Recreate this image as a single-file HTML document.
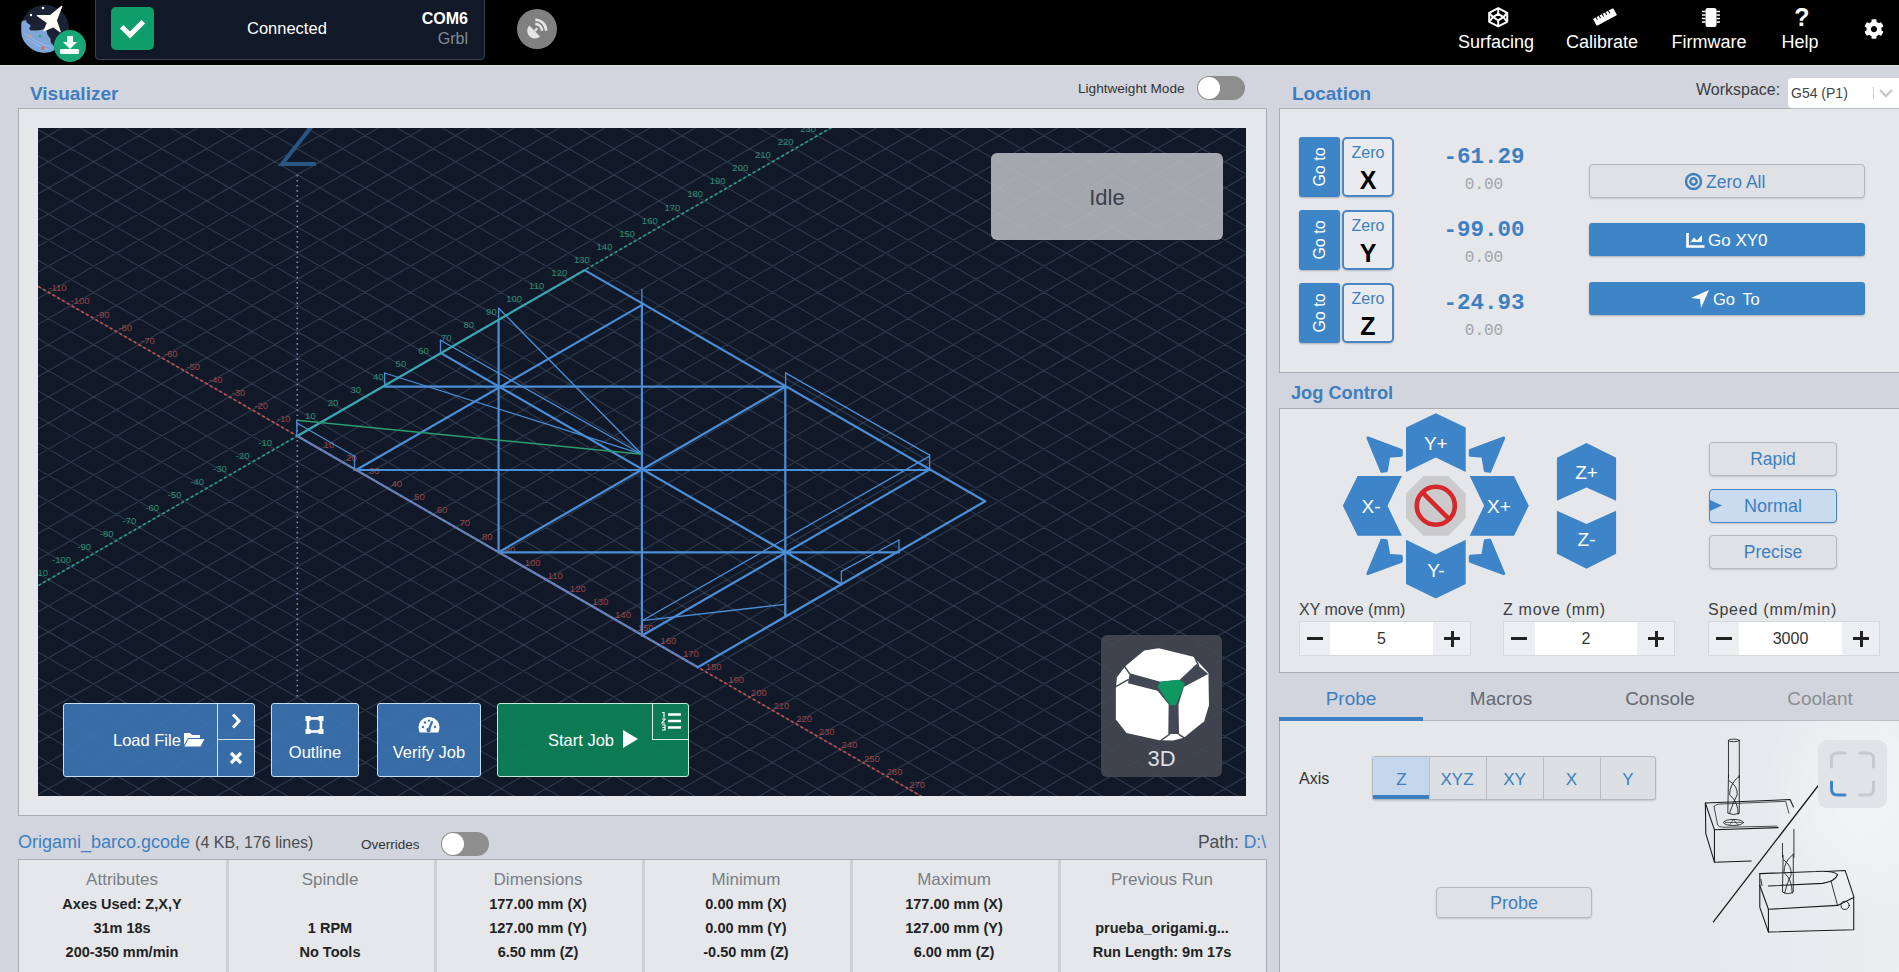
<!DOCTYPE html>
<html><head><meta charset="utf-8">
<style>
*{box-sizing:border-box;margin:0;padding:0}
html,body{width:1899px;height:972px;overflow:hidden}
body{background:#d2d5dd;font-family:"Liberation Sans",sans-serif;position:relative;color:#333}
.a{position:absolute}
.hdr{left:0;top:0;width:1899px;height:65px;background:#000;border-bottom:0}
.conn{left:95px;top:-2px;width:390px;height:62px;background:#111827;border:1px solid #3b4252;border-radius:0 0 4px 4px}
.title{font-weight:bold;color:#3d7ec0;font-size:19px}
.nav{color:#fff;font-size:18px;text-align:center}
.box{border:1px solid #a9adb5;background:#e5e7eb}
.btnb{background:#3e85c7;color:#fff;border-radius:3px}
.mono{font-family:"Liberation Mono",monospace}
</style></head><body>
<!-- HEADER -->
<div class="a hdr"></div>
<div class="a" style="left:0;top:65px;width:1899px;height:1px;background:#dfe2e7"></div>
<svg class="a" style="left:0;top:0" width="100" height="64" viewBox="0 0 100 64">
  <circle cx="45" cy="29" r="24" fill="#1a2234"/>
  <path d="M21.3 23.7 Q21.5 20.8 22.9 20.7 Q25.5 19.8 26.2 20.4 Q26.5 22.5 27.2 23 Q30.5 24.5 30.8 26 Q29 28 29.2 29 Q31 30.8 32.1 30.6 Q37 30.5 40.7 30 Q44 29 45.9 29 Q47 32 47.3 34.2 Q49 37 50.5 38.8 Q50.5 41 50.9 42.8 Q53 44.5 53.8 46.1 Q54.5 48 54.5 50 Q49 53.5 43.3 52.7 Q36 52 31.5 48.7 Q26 45 23.6 40.8 Q21 36 21.3 31.6 Z" fill="#7ea6d8"/>
  <path d="M24.5 33 Q36 43 51 47 M26 38 Q38 46 48 50" stroke="#a8c4e6" stroke-width="0.7" fill="none"/>
  <circle cx="30" cy="36" r="1.6" fill="#c9a07a"/>
  <circle cx="40" cy="36" r="1.6" fill="#3aa57a"/>
  <circle cx="43" cy="48" r="1.8" fill="#d86a6a"/>
  <path d="M61.8 6.3 L50.5 15.5 L37.2 15.6 L47.5 22.8 L44 30.8 L53.5 26.8 L60.2 31.8 L56.3 20.5 Z" fill="#fdfcf4" stroke="#fdfcf4" stroke-width="1.2" stroke-linejoin="round"/>
  <circle cx="43" cy="8" r="1.3" fill="#fff"/>
  <circle cx="31" cy="15" r="1.2" fill="#fff"/>
  <circle cx="70" cy="46" r="16" fill="#18a878"/>
  <path d="M67 36 h6 v6 h4 l-7 7 l-7 -7 h4 z" fill="#f2fff8"/>
  <rect x="60" y="49" width="19" height="5" rx="1" fill="#f2fff8"/>
</svg>
<div class="a conn"></div>
<div class="a" style="left:111px;top:7px;width:43px;height:43px;background:#0f9d69;border-radius:5px"></div>
<svg class="a" style="left:111px;top:7px" width="43" height="43" viewBox="0 0 43 43"><path d="M12.5 21.5 L19 28 L30.5 16.5" stroke="#fff" stroke-width="5" fill="none" stroke-linecap="square"/></svg>
<div class="a" style="left:247px;top:19px;color:#fff;font-size:16.5px">Connected</div>
<div class="a" style="left:400px;top:10px;width:68px;text-align:right;color:#fff;font-size:16px;font-weight:bold">COM6</div>
<div class="a" style="left:400px;top:30px;width:68px;text-align:right;color:#858b95;font-size:16px">Grbl</div>
<div class="a" style="left:517px;top:9px;width:40px;height:40px;border-radius:50%;background:#808080"></div>
<svg class="a" style="left:517px;top:9px" width="40" height="40" viewBox="0 0 40 40">
  <path d="M12.3 16.4 A7.75 7.75 0 0 0 23.1 27.5 Z" fill="#e4e4e4"/>
  <path d="M17.7 21.9 L20.3 19.3" stroke="#e4e4e4" stroke-width="2.2"/>
  <path d="M18.3 14.9 A6.8 6.8 0 0 1 25 21.7" stroke="#e4e4e4" stroke-width="2.6" fill="none"/>
  <path d="M18.3 10.8 A10.9 10.9 0 0 1 29.1 21.7" stroke="#e4e4e4" stroke-width="2.6" fill="none"/>
</svg>

<svg class="a" style="left:1486px;top:7px" width="24" height="21" viewBox="0 0 24 21">
  <g fill="none" stroke="#fff" stroke-width="2" stroke-linejoin="round">
    <path d="M12.2 1.2 L21.2 5.8 V14.8 L12.2 19.4 L3.2 14.8 V5.8 Z"/>
    <path d="M12.2 6.9 L17.4 10.2 L12.2 13.3 L7 10.2 Z"/>
    <path d="M12.2 1.2 V6.9 M12.2 13.3 V19.4 M3.2 5.8 L7 10.2 L3.2 14.8 M21.2 5.8 L17.4 10.2 L21.2 14.8"/>
  </g>
</svg>
<svg class="a" style="left:1592px;top:7px" width="26" height="20" viewBox="0 0 26 20">
  <g transform="rotate(-28 13 10)"><rect x="1.5" y="6" width="23" height="8" rx="1" fill="#fff"/>
  <path d="M5 6 v3 M8.5 6 v3 M12 6 v3 M15.5 6 v3 M19 6 v3" stroke="#000" stroke-width="1"/></g>
</svg>
<svg class="a" style="left:1700px;top:7px" width="22" height="21" viewBox="0 0 22 21">
  <rect x="5.5" y="1" width="11" height="19" rx="2" fill="#fff"/>
  <path d="M2 4.5h3.5 M2 8h3.5 M2 11.5h3.5 M2 15h3.5 M16.5 4.5H20 M16.5 8H20 M16.5 11.5H20 M16.5 15H20" stroke="#fff" stroke-width="1.4"/>
</svg>
<div class="a" style="left:1791px;top:3px;width:22px;text-align:center;color:#fff;font-size:25px;font-weight:bold">?</div>
<svg class="a" style="left:1864px;top:19px" width="20" height="20" viewBox="0 0 512 512"><path fill="#fff" d="M487.4 315.7l-42.6-24.6c4.3-23.2 4.3-47 0-70.2l42.6-24.6c4.9-2.8 7.1-8.6 5.5-14-11.1-35.6-30-67.8-54.7-94.6-3.8-4.1-10-5.1-14.8-2.3L380.8 110c-17.9-15.4-38.5-27.3-60.8-35.1V25.8c0-5.6-3.9-10.5-9.4-11.7-36.7-8.2-74.3-7.8-109.2 0-5.5 1.2-9.4 6.1-9.4 11.7V75c-22.2 7.9-42.8 19.8-60.8 35.1L88.7 85.5c-4.9-2.8-11-1.9-14.8 2.3-24.7 26.700-43.600 58.900-54.700 94.600-1.700 5.400.600 11.200 5.500 14L67.300 221c-4.300 23.200-4.300 47 0 70.200l-42.600 24.600c-4.900 2.800-7.100 8.600-5.500 14 11.100 35.600 30 67.800 54.700 94.600 3.800 4.100 10 5.100 14.800 2.300l42.600-24.600c17.900 15.400 38.500 27.300 60.800 35.100v49.200c0 5.600 3.900 10.500 9.400 11.700 36.700 8.200 74.300 7.800 109.200 0 5.500-1.200 9.400-6.100 9.400-11.700v-49.200c22.200-7.900 42.800-19.800 60.800-35.100l42.600 24.600c4.900 2.800 11 1.900 14.800-2.300 24.700-26.700 43.600-58.900 54.700-94.600 1.500-5.500-.700-11.300-5.600-14.100zM256 336c-44.100 0-80-35.900-80-80s35.900-80 80-80 80 35.900 80 80-35.900 80-80 80z"/></svg>

<div class="a nav" style="left:1446px;top:32px;width:100px">Surfacing</div>
<div class="a nav" style="left:1552px;top:32px;width:100px">Calibrate</div>
<div class="a nav" style="left:1659px;top:32px;width:100px">Firmware</div>
<div class="a nav" style="left:1770px;top:32px;width:60px">Help</div>

<!-- VISUALIZER -->
<div class="a title" style="left:30px;top:83px">Visualizer</div>
<div class="a" style="left:1078px;top:81px;font-size:13.6px;color:#333">Lightweight Mode</div>
<div class="a" style="left:1197px;top:76px;width:48px;height:24px;border-radius:12px;background:#8e8e8e"></div>
<div class="a" style="left:1198px;top:77px;width:22px;height:22px;border-radius:50%;background:#fff"></div>
<div class="a box" style="left:18px;top:108px;width:1249px;height:708px"></div>
<svg class="a" style="left:38px;top:128px" width="1208" height="668" viewBox="38 128 1208 668">
<rect x="38" y="128" width="1208" height="668" fill="#111827"/>
<path d="M38 -549.52L1246 147.79M38 -523.40L1246 173.91M38 -497.28L1246 200.03M38 -471.16L1246 226.15M38 -445.04L1246 252.27M38 -418.92L1246 278.39M38 -392.80L1246 304.51M38 -366.68L1246 330.63M38 -340.56L1246 356.75M38 -314.44L1246 382.87M38 -288.32L1246 408.99M38 -262.20L1246 435.11M38 -236.08L1246 461.23M38 -209.96L1246 487.35M38 -183.84L1246 513.47M38 -157.72L1246 539.59M38 -131.60L1246 565.71M38 -105.48L1246 591.83M38 -79.36L1246 617.95M38 -53.24L1246 644.07M38 -27.12L1246 670.19M38 -1.00L1246 696.31M38 25.12L1246 722.43M38 51.24L1246 748.55M38 77.36L1246 774.67M38 103.48L1246 800.79M38 129.60L1246 826.91M38 155.72L1246 853.03M38 181.84L1246 879.15M38 207.96L1246 905.27M38 234.08L1246 931.39M38 260.20L1246 957.51M38 286.32L1246 983.63M38 312.44L1246 1009.75M38 338.56L1246 1035.87M38 364.68L1246 1061.99M38 390.80L1246 1088.11M38 416.92L1246 1114.23M38 443.04L1246 1140.35M38 469.16L1246 1166.47M38 495.28L1246 1192.59M38 521.40L1246 1218.71M38 547.52L1246 1244.83M38 573.64L1246 1270.95M38 599.76L1246 1297.07M38 625.88L1246 1323.19M38 652.00L1246 1349.31M38 678.12L1246 1375.43M38 704.24L1246 1401.55M38 730.36L1246 1427.67M38 756.48L1246 1453.79M38 782.60L1246 1479.91M38 141.64L1246 -555.67M38 167.76L1246 -529.55M38 193.88L1246 -503.43M38 220.00L1246 -477.31M38 246.12L1246 -451.19M38 272.24L1246 -425.07M38 298.36L1246 -398.95M38 324.48L1246 -372.83M38 350.60L1246 -346.71M38 376.72L1246 -320.59M38 402.84L1246 -294.47M38 428.96L1246 -268.35M38 455.08L1246 -242.23M38 481.20L1246 -216.11M38 507.32L1246 -189.99M38 533.44L1246 -163.87M38 559.56L1246 -137.75M38 585.68L1246 -111.63M38 611.80L1246 -85.51M38 637.92L1246 -59.39M38 664.04L1246 -33.27M38 690.16L1246 -7.15M38 716.28L1246 18.97M38 742.40L1246 45.09M38 768.52L1246 71.21M38 794.64L1246 97.33M38 820.76L1246 123.45M38 846.88L1246 149.57M38 873.00L1246 175.69M38 899.12L1246 201.81M38 925.24L1246 227.93M38 951.36L1246 254.05M38 977.48L1246 280.17M38 1003.60L1246 306.29M38 1029.72L1246 332.41M38 1055.84L1246 358.53M38 1081.96L1246 384.65M38 1108.08L1246 410.77M38 1134.20L1246 436.89M38 1160.32L1246 463.01M38 1186.44L1246 489.13M38 1212.56L1246 515.25M38 1238.68L1246 541.37M38 1264.80L1246 567.49M38 1290.92L1246 593.61M38 1317.04L1246 619.73M38 1343.16L1246 645.85M38 1369.28L1246 671.97M38 1395.40L1246 698.09M38 1421.52L1246 724.21M38 1447.64L1246 750.33M38 1473.76L1246 776.45" stroke="#2d394b" stroke-width="1.2" fill="none"/>
<line x1="14.5" y1="272.8" x2="942.1" y2="808.2" stroke="#c4514f" stroke-width="1.6" stroke-dasharray="3 2.5"/>
<line x1="14.5" y1="599.2" x2="851.6" y2="116.0" stroke="#2c9f86" stroke-width="1.6" stroke-dasharray="3 2.5"/>
<line x1="297.3" y1="174.8" x2="297.3" y2="697.2" stroke="#6a8ab8" stroke-width="1.7" stroke-dasharray="1.6 3.5"/>
<path d="M312 126 L282 164 L316 164" stroke="#2a5686" stroke-width="4" fill="none" stroke-linejoin="miter"/>
<g font-family="Liberation Sans" font-size="9.5" text-anchor="middle" opacity="0.8"><text x="57.4" y="291.3" fill="#b9504f">-110</text><text x="80.0" y="304.4" fill="#b9504f">-100</text><text x="102.7" y="317.5" fill="#b9504f">-90</text><text x="125.3" y="330.5" fill="#b9504f">-80</text><text x="147.9" y="343.6" fill="#b9504f">-70</text><text x="170.6" y="356.6" fill="#b9504f">-60</text><text x="193.2" y="369.7" fill="#b9504f">-50</text><text x="215.8" y="382.8" fill="#b9504f">-40</text><text x="238.4" y="395.8" fill="#b9504f">-30</text><text x="261.1" y="408.9" fill="#b9504f">-20</text><text x="283.7" y="421.9" fill="#b9504f">-10</text><text x="328.9" y="448.1" fill="#b9504f">10</text><text x="351.6" y="461.1" fill="#b9504f">20</text><text x="374.2" y="474.2" fill="#b9504f">30</text><text x="396.8" y="487.2" fill="#b9504f">40</text><text x="419.4" y="500.3" fill="#b9504f">50</text><text x="442.1" y="513.4" fill="#b9504f">60</text><text x="464.7" y="526.4" fill="#b9504f">70</text><text x="487.3" y="539.5" fill="#b9504f">80</text><text x="509.9" y="552.5" fill="#b9504f">90</text><text x="532.6" y="565.6" fill="#b9504f">100</text><text x="555.2" y="578.7" fill="#b9504f">110</text><text x="577.8" y="591.7" fill="#b9504f">120</text><text x="600.4" y="604.8" fill="#b9504f">130</text><text x="623.0" y="617.8" fill="#b9504f">140</text><text x="645.7" y="630.9" fill="#b9504f">150</text><text x="668.3" y="644.0" fill="#b9504f">160</text><text x="690.9" y="657.0" fill="#b9504f">170</text><text x="713.6" y="670.1" fill="#b9504f">180</text><text x="736.2" y="683.1" fill="#b9504f">190</text><text x="758.8" y="696.2" fill="#b9504f">200</text><text x="781.4" y="709.3" fill="#b9504f">210</text><text x="804.1" y="722.3" fill="#b9504f">220</text><text x="826.7" y="735.4" fill="#b9504f">230</text><text x="849.3" y="748.4" fill="#b9504f">240</text><text x="871.9" y="761.5" fill="#b9504f">250</text><text x="894.5" y="774.6" fill="#b9504f">260</text><text x="917.2" y="787.6" fill="#b9504f">270</text><text x="38.9" y="576.2" fill="#33a888">-110</text><text x="61.5" y="563.1" fill="#33a888">-100</text><text x="84.2" y="550.0" fill="#33a888">-90</text><text x="106.8" y="537.0" fill="#33a888">-80</text><text x="129.4" y="523.9" fill="#33a888">-70</text><text x="152.1" y="510.9" fill="#33a888">-60</text><text x="174.7" y="497.8" fill="#33a888">-50</text><text x="197.3" y="484.7" fill="#33a888">-40</text><text x="219.9" y="471.7" fill="#33a888">-30</text><text x="242.6" y="458.6" fill="#33a888">-20</text><text x="265.2" y="445.6" fill="#33a888">-10</text><text x="310.4" y="419.4" fill="#33a888">10</text><text x="333.1" y="406.4" fill="#33a888">20</text><text x="355.7" y="393.3" fill="#33a888">30</text><text x="378.3" y="380.3" fill="#33a888">40</text><text x="400.9" y="367.2" fill="#33a888">50</text><text x="423.6" y="354.1" fill="#33a888">60</text><text x="446.2" y="341.1" fill="#33a888">70</text><text x="468.8" y="328.0" fill="#33a888">80</text><text x="491.4" y="315.0" fill="#33a888">90</text><text x="514.1" y="301.9" fill="#33a888">100</text><text x="536.7" y="288.8" fill="#33a888">110</text><text x="559.3" y="275.8" fill="#33a888">120</text><text x="581.9" y="262.7" fill="#33a888">130</text><text x="604.5" y="249.7" fill="#33a888">140</text><text x="627.2" y="236.6" fill="#33a888">150</text><text x="649.8" y="223.5" fill="#33a888">160</text><text x="672.4" y="210.5" fill="#33a888">170</text><text x="695.1" y="197.4" fill="#33a888">180</text><text x="717.7" y="184.4" fill="#33a888">190</text><text x="740.3" y="171.3" fill="#33a888">200</text><text x="762.9" y="158.2" fill="#33a888">210</text><text x="785.6" y="145.2" fill="#33a888">220</text><text x="808.2" y="132.1" fill="#33a888">230</text></g>
<g stroke="#4b8fd8" fill="none" stroke-linecap="round">
<line x1="297.3" y1="436.0" x2="697.8" y2="667.2" stroke="#4b8fd8" stroke-width="2.2" />
<line x1="697.8" y1="667.2" x2="985.1" y2="501.3" stroke="#4b8fd8" stroke-width="2.2" />
<line x1="985.1" y1="501.3" x2="584.6" y2="270.1" stroke="#4b8fd8" stroke-width="2.2" />
<line x1="354.5" y1="470.0" x2="929.6" y2="470.0" stroke="#4b8fd8" stroke-width="2.2" />
<line x1="384.6" y1="386.7" x2="784.3" y2="386.7" stroke="#4b8fd8" stroke-width="2.2" />
<line x1="499.0" y1="552.3" x2="899.0" y2="552.3" stroke="#4b8fd8" stroke-width="2.2" />
<line x1="356.1" y1="470.0" x2="643.5" y2="304.1" stroke="#4b8fd8" stroke-width="2.2" />
<line x1="498.7" y1="552.2" x2="786.0" y2="386.4" stroke="#4b8fd8" stroke-width="2.2" />
<line x1="642.6" y1="635.3" x2="929.9" y2="469.4" stroke="#4b8fd8" stroke-width="2.2" />
<line x1="441.0" y1="353.1" x2="841.4" y2="584.2" stroke="#4b8fd8" stroke-width="2.2" />
<line x1="498.6" y1="319.8" x2="498.6" y2="552.3" stroke="#4b8fd8" stroke-width="2.2" />
<line x1="641.9" y1="302.8" x2="641.9" y2="635.8" stroke="#4b8fd8" stroke-width="2.2" />
<line x1="785.3" y1="386.7" x2="785.3" y2="615.2" stroke="#4b8fd8" stroke-width="2.2" />
<line x1="296.8" y1="436.3" x2="296.8" y2="420.2" stroke="#4b8fd8" stroke-width="1.3" />
<line x1="296.8" y1="423.0" x2="354.5" y2="456.3" stroke="#4b8fd8" stroke-width="1.3" />
<line x1="354.5" y1="456.3" x2="354.5" y2="470.0" stroke="#4b8fd8" stroke-width="1.3" />
<line x1="384.6" y1="373.0" x2="384.6" y2="386.7" stroke="#4b8fd8" stroke-width="1.3" />
<line x1="384.6" y1="373.0" x2="641.9" y2="454.2" stroke="#4b8fd8" stroke-width="1.3" />
<line x1="440.5" y1="340.3" x2="440.5" y2="354.0" stroke="#4b8fd8" stroke-width="1.3" />
<line x1="440.5" y1="340.3" x2="641.9" y2="454.2" stroke="#4b8fd8" stroke-width="1.3" />
<line x1="498.6" y1="308.2" x2="498.6" y2="320.0" stroke="#4b8fd8" stroke-width="1.3" />
<line x1="498.6" y1="308.2" x2="641.9" y2="454.2" stroke="#4b8fd8" stroke-width="1.3" />
<line x1="641.9" y1="289.3" x2="641.9" y2="303.0" stroke="#4b8fd8" stroke-width="1.3" />
<line x1="785.6" y1="372.9" x2="785.6" y2="387.0" stroke="#4b8fd8" stroke-width="1.3" />
<line x1="785.6" y1="372.9" x2="929.6" y2="455.1" stroke="#4b8fd8" stroke-width="1.3" />
<line x1="929.6" y1="455.1" x2="929.6" y2="470.0" stroke="#4b8fd8" stroke-width="1.3" />
<line x1="929.1" y1="456.4" x2="642.1" y2="620.7" stroke="#4b8fd8" stroke-width="1.3" />
<line x1="642.1" y1="620.7" x2="785.3" y2="604.3" stroke="#4b8fd8" stroke-width="1.3" />
<line x1="785.3" y1="604.3" x2="785.3" y2="616.0" stroke="#4b8fd8" stroke-width="1.3" />
<line x1="841.4" y1="571.4" x2="841.4" y2="585.1" stroke="#4b8fd8" stroke-width="1.3" />
<line x1="841.4" y1="571.4" x2="899.0" y2="540.0" stroke="#4b8fd8" stroke-width="1.3" />
<line x1="899.0" y1="540.0" x2="899.0" y2="552.3" stroke="#4b8fd8" stroke-width="1.3" />
</g>
<line x1="297.3" y1="436.0" x2="584.6" y2="270.1" stroke="#3aa6b4" stroke-width="2.2" />
<line x1="296.8" y1="420.2" x2="641.9" y2="454.2" stroke="#2c9e6e" stroke-width="1.6" />
<line x1="297.3" y1="436.0" x2="697.8" y2="667.2" stroke="#c4514f" stroke-width="1.6" stroke-dasharray="3 2.5" opacity="0.55"/>
</svg>
<!-- idle -->
<div class="a" style="left:991px;top:153px;width:232px;height:87px;border-radius:6px;background:rgba(188,191,197,0.86)"></div>
<div class="a" style="left:991px;top:185px;width:232px;text-align:center;font-size:22px;color:#3b4048">Idle</div>
<!-- 3D widget -->
<div class="a" style="left:1101px;top:635px;width:121px;height:142px;border-radius:6px;background:rgba(68,73,84,0.88)"></div>
<svg class="a" style="left:1110px;top:642px" width="104" height="104" viewBox="0 0 972 972">
  <path d="M55 430 L65 330 L140 230 L320 80 L455 58 L780 138 L920 290 L925 590 L880 740 L690 895 L590 920 L460 918 L155 850 L55 725 Z" fill="#fff"/>
  <g fill="#424854">
    <polygon points="185,292 470,372 650,355 808,205 918,298 690,420 640,585 645,860 545,860 548,585 445,455 168,385"/>
  </g>
  <g stroke="#424854" stroke-width="14" fill="none">
    <path d="M135 225 L185 300"/>
    <path d="M50 420 L175 350"/>
    <path d="M790 140 L830 225"/>
    <path d="M470 925 L560 860 M640 860 L700 900"/>
  </g>
  <polygon points="455,415 480,380 640,362 688,392 610,578 565,580" fill="#0f9960" stroke="#0f9960" stroke-width="20" stroke-linejoin="round"/>
</svg>
<div class="a" style="left:1101px;top:746px;width:121px;text-align:center;font-size:22px;color:#dcdee3">3D</div>
<!-- buttons -->
<div class="a" style="left:63px;top:703px;width:192px;height:74px;background:rgba(58,115,178,0.93);border:1px solid #c9dcf0;border-radius:3px"></div>
<div class="a" style="left:217px;top:703px;width:1px;height:74px;background:#d9e4f2"></div>
<div class="a" style="left:217px;top:739px;width:38px;height:1px;background:#d9e4f2"></div>
<div class="a" style="left:113px;top:731px;color:#fff;font-size:16.5px">Load File</div>
<svg class="a" style="left:183px;top:731px" width="22" height="17" viewBox="0 0 22 17"><path d="M1 2 h6 l2 2 h8 v3 H5 L1 14 Z" fill="#fff"/><path d="M5.5 8 H21.5 L17.5 15.5 H1.5 Z" fill="#fff"/></svg>
<svg class="a" style="left:228px;top:712px" width="16" height="18" viewBox="0 0 16 18"><path d="M5 2.5 L11 9 L5 15.5" stroke="#fff" stroke-width="3" fill="none"/></svg>
<svg class="a" style="left:228px;top:750px" width="16" height="16" viewBox="0 0 16 16"><path d="M3 3 L13 13 M13 3 L3 13" stroke="#fff" stroke-width="3.2" fill="none"/></svg>

<div class="a" style="left:271px;top:703px;width:88px;height:74px;background:rgba(58,115,178,0.93);border:1px solid #c9dcf0;border-radius:3px"></div>
<svg class="a" style="left:304px;top:715px" width="22" height="20" viewBox="0 0 22 20"><rect x="4" y="3.5" width="13" height="13" fill="none" stroke="#fff" stroke-width="2.6"/><rect x="1.5" y="1" width="5" height="5" fill="#fff"/><rect x="14.5" y="1" width="5" height="5" fill="#fff"/><rect x="1.5" y="14" width="5" height="5" fill="#fff"/><rect x="14.5" y="14" width="5" height="5" fill="#fff"/></svg>
<div class="a" style="left:271px;top:743px;width:88px;text-align:center;color:#fff;font-size:16.5px">Outline</div>

<div class="a" style="left:377px;top:703px;width:104px;height:74px;background:rgba(58,115,178,0.93);border:1px solid #c9dcf0;border-radius:3px"></div>
<svg class="a" style="left:417px;top:717px" width="24" height="17" viewBox="0 0 24 17"><path d="M2.77 15.5 A10.5 10.5 0 1 1 21.23 15.5 Z" fill="#fff"/><path d="M11.5 13.5 L15 5" stroke="#3a73b2" stroke-width="2.2" stroke-linecap="round"/><circle cx="11.5" cy="13" r="2.2" fill="#3a73b2"/><circle cx="6" cy="10" r="1.2" fill="#3a73b2"/><circle cx="8" cy="5.5" r="1.2" fill="#3a73b2"/><circle cx="12" cy="3.6" r="1.2" fill="#3a73b2"/><circle cx="18" cy="10" r="1.2" fill="#3a73b2"/></svg>
<div class="a" style="left:377px;top:743px;width:104px;text-align:center;color:#fff;font-size:16.5px">Verify Job</div>

<div class="a" style="left:497px;top:703px;width:192px;height:74px;background:rgba(14,128,88,0.95);border:1px solid #c6eadb;border-radius:3px"></div>
<div class="a" style="left:652px;top:703px;width:37px;height:37px;border-left:1px solid #d8efe5;border-bottom:1px solid #d8efe5"></div>
<div class="a" style="left:548px;top:731px;color:#fff;font-size:16.5px">Start Job</div>
<svg class="a" style="left:621px;top:729px" width="18" height="20" viewBox="0 0 18 20"><path d="M2 1 L17 10 L2 19 Z" fill="#fff"/></svg>
<svg class="a" style="left:660px;top:711px" width="22" height="20" viewBox="0 0 22 20"><path d="M8 3.5 H21 M8 10 H21 M8 16.5 H21" stroke="#fff" stroke-width="2.6"/><path d="M2 1.5 h2 v5 M2 8 h3 l-3 4 h3 M2 14 h3 v5 h-3 M2.5 16.5 h2" stroke="#fff" stroke-width="1.2" fill="none"/></svg>


<!-- FILE INFO -->
<div class="a" style="left:18px;top:832px;font-size:18px;color:#3d7fc1">Origami_barco.gcode <span style="color:#4a4d52;font-size:16px">(4 KB, 176 lines)</span></div>
<div class="a" style="left:361px;top:837px;font-size:13.5px;color:#333">Overrides</div>
<div class="a" style="left:441px;top:832px;width:48px;height:24px;border-radius:12px;background:#8e8e8e"></div>
<div class="a" style="left:442px;top:833px;width:22px;height:22px;border-radius:50%;background:#fff"></div>
<div class="a" style="left:1100px;top:832px;width:166px;text-align:right;font-size:17.5px;color:#4a4d52">Path: <span style="color:#3d7fc1">D:\</span></div>
<div class="a" style="left:18px;top:859px;width:1249px;height:121px;border:1px solid #a9adb5;background:#e5e7eb"></div>
<div class="a" style="left:18px;top:870px;width:208px;text-align:center;font-size:17px;color:#7a7e86">Attributes</div>
<div class="a" style="left:18px;top:896px;width:208px;text-align:center;font-size:14.5px;font-weight:bold;color:#222">Axes Used: Z,X,Y</div>
<div class="a" style="left:18px;top:920px;width:208px;text-align:center;font-size:14.5px;font-weight:bold;color:#222">31m 18s</div>
<div class="a" style="left:18px;top:944px;width:208px;text-align:center;font-size:14.5px;font-weight:bold;color:#222">200-350 mm/min</div>
<div class="a" style="left:226px;top:860px;width:3px;height:112px;background:#cdd0d5"></div>
<div class="a" style="left:226px;top:870px;width:208px;text-align:center;font-size:17px;color:#7a7e86">Spindle</div>
<div class="a" style="left:226px;top:920px;width:208px;text-align:center;font-size:14.5px;font-weight:bold;color:#222">1 RPM</div>
<div class="a" style="left:226px;top:944px;width:208px;text-align:center;font-size:14.5px;font-weight:bold;color:#222">No Tools</div>
<div class="a" style="left:434px;top:860px;width:3px;height:112px;background:#cdd0d5"></div>
<div class="a" style="left:434px;top:870px;width:208px;text-align:center;font-size:17px;color:#7a7e86">Dimensions</div>
<div class="a" style="left:434px;top:896px;width:208px;text-align:center;font-size:14.5px;font-weight:bold;color:#222">177.00 mm (X)</div>
<div class="a" style="left:434px;top:920px;width:208px;text-align:center;font-size:14.5px;font-weight:bold;color:#222">127.00 mm (Y)</div>
<div class="a" style="left:434px;top:944px;width:208px;text-align:center;font-size:14.5px;font-weight:bold;color:#222">6.50 mm (Z)</div>
<div class="a" style="left:642px;top:860px;width:3px;height:112px;background:#cdd0d5"></div>
<div class="a" style="left:642px;top:870px;width:208px;text-align:center;font-size:17px;color:#7a7e86">Minimum</div>
<div class="a" style="left:642px;top:896px;width:208px;text-align:center;font-size:14.5px;font-weight:bold;color:#222">0.00 mm (X)</div>
<div class="a" style="left:642px;top:920px;width:208px;text-align:center;font-size:14.5px;font-weight:bold;color:#222">0.00 mm (Y)</div>
<div class="a" style="left:642px;top:944px;width:208px;text-align:center;font-size:14.5px;font-weight:bold;color:#222">-0.50 mm (Z)</div>
<div class="a" style="left:850px;top:860px;width:3px;height:112px;background:#cdd0d5"></div>
<div class="a" style="left:850px;top:870px;width:208px;text-align:center;font-size:17px;color:#7a7e86">Maximum</div>
<div class="a" style="left:850px;top:896px;width:208px;text-align:center;font-size:14.5px;font-weight:bold;color:#222">177.00 mm (X)</div>
<div class="a" style="left:850px;top:920px;width:208px;text-align:center;font-size:14.5px;font-weight:bold;color:#222">127.00 mm (Y)</div>
<div class="a" style="left:850px;top:944px;width:208px;text-align:center;font-size:14.5px;font-weight:bold;color:#222">6.00 mm (Z)</div>
<div class="a" style="left:1058px;top:860px;width:3px;height:112px;background:#cdd0d5"></div>
<div class="a" style="left:1058px;top:870px;width:208px;text-align:center;font-size:17px;color:#7a7e86">Previous Run</div>
<div class="a" style="left:1058px;top:920px;width:208px;text-align:center;font-size:14.5px;font-weight:bold;color:#222">prueba_origami.g...</div>
<div class="a" style="left:1058px;top:944px;width:208px;text-align:center;font-size:14.5px;font-weight:bold;color:#222">Run Length: 9m 17s</div>
<!-- RIGHT PANEL -->
<div class="a title" style="left:1292px;top:83px">Location</div>
<div class="a box" style="left:1279px;top:108px;width:630px;height:265px"></div>
<div class="a" style="left:1696px;top:81px;font-size:16px;color:#3a3d42">Workspace:</div>
<div class="a" style="left:1788px;top:78px;width:115px;height:31px;background:#fff;border-radius:4px;border-bottom:1px solid #b9bcc2"></div>
<div class="a" style="left:1791px;top:85px;font-size:14px;color:#444">G54 (P1)</div>
<div class="a" style="left:1873px;top:87px;width:1px;height:12px;background:#ccc"></div>
<svg class="a" style="left:1878px;top:88px" width="16" height="11" viewBox="0 0 16 11"><path d="M2 2 L8 8 L14 2" stroke="#c8c8c8" stroke-width="2.4" fill="none"/></svg>
<div class="a" style="left:1299px;top:137px;width:41px;height:60px;background:#3e85c7;border-radius:3px;box-shadow:0 1px 2px rgba(0,0,0,.25)"></div>
<div class="a" style="left:1290px;top:158px;width:60px;height:18px;line-height:18px;text-align:center;color:#fff;font-size:16px;transform:rotate(-90deg)">Go to</div>
<div class="a" style="left:1342px;top:137px;width:52px;height:60px;border:2px solid #4a86c5;border-radius:5px;background:#e9ebef;box-shadow:0 1px 2px rgba(0,0,0,.2)"></div>
<div class="a" style="left:1342px;top:144px;width:52px;text-align:center;color:#3d7fc1;font-size:16px">Zero</div>
<div class="a" style="left:1342px;top:166px;width:52px;text-align:center;color:#000;font-size:25px;font-weight:bold">X</div>
<div class="a mono" style="left:1404px;top:144px;width:160px;text-align:center;color:#3d7fc1;font-size:22.5px;font-weight:bold">-61.29</div>
<div class="a mono" style="left:1404px;top:176px;width:160px;text-align:center;color:#a2a4a8;font-size:16px">0.00</div>
<div class="a" style="left:1299px;top:210px;width:41px;height:60px;background:#3e85c7;border-radius:3px;box-shadow:0 1px 2px rgba(0,0,0,.25)"></div>
<div class="a" style="left:1290px;top:231px;width:60px;height:18px;line-height:18px;text-align:center;color:#fff;font-size:16px;transform:rotate(-90deg)">Go to</div>
<div class="a" style="left:1342px;top:210px;width:52px;height:60px;border:2px solid #4a86c5;border-radius:5px;background:#e9ebef;box-shadow:0 1px 2px rgba(0,0,0,.2)"></div>
<div class="a" style="left:1342px;top:217px;width:52px;text-align:center;color:#3d7fc1;font-size:16px">Zero</div>
<div class="a" style="left:1342px;top:239px;width:52px;text-align:center;color:#000;font-size:25px;font-weight:bold">Y</div>
<div class="a mono" style="left:1404px;top:217px;width:160px;text-align:center;color:#3d7fc1;font-size:22.5px;font-weight:bold">-99.00</div>
<div class="a mono" style="left:1404px;top:249px;width:160px;text-align:center;color:#a2a4a8;font-size:16px">0.00</div>
<div class="a" style="left:1299px;top:283px;width:41px;height:60px;background:#3e85c7;border-radius:3px;box-shadow:0 1px 2px rgba(0,0,0,.25)"></div>
<div class="a" style="left:1290px;top:304px;width:60px;height:18px;line-height:18px;text-align:center;color:#fff;font-size:16px;transform:rotate(-90deg)">Go to</div>
<div class="a" style="left:1342px;top:283px;width:52px;height:60px;border:2px solid #4a86c5;border-radius:5px;background:#e9ebef;box-shadow:0 1px 2px rgba(0,0,0,.2)"></div>
<div class="a" style="left:1342px;top:290px;width:52px;text-align:center;color:#3d7fc1;font-size:16px">Zero</div>
<div class="a" style="left:1342px;top:312px;width:52px;text-align:center;color:#000;font-size:25px;font-weight:bold">Z</div>
<div class="a mono" style="left:1404px;top:290px;width:160px;text-align:center;color:#3d7fc1;font-size:22.5px;font-weight:bold">-24.93</div>
<div class="a mono" style="left:1404px;top:322px;width:160px;text-align:center;color:#a2a4a8;font-size:16px">0.00</div>
<div class="a" style="left:1589px;top:164px;width:276px;height:34px;background:#dfe1e5;border:1px solid #b5b9bf;border-radius:4px;box-shadow:0 1px 2px rgba(0,0,0,.15)"></div>
<svg class="a" style="left:1684px;top:172px" width="19" height="19" viewBox="0 0 19 19"><circle cx="9.5" cy="9.5" r="7.5" fill="none" stroke="#3d7fc1" stroke-width="2.4"/><circle cx="9.5" cy="9.5" r="3.2" fill="none" stroke="#3d7fc1" stroke-width="2.4"/></svg>
<div class="a" style="left:1706px;top:172px;font-size:17.5px;color:#3d7fc1">Zero All</div>
<div class="a" style="left:1589px;top:223px;width:276px;height:33px;background:#3e85c7;border-radius:3px;box-shadow:0 1px 2px rgba(0,0,0,.25)"></div>
<svg class="a" style="left:1686px;top:232px" width="19" height="16" viewBox="0 0 19 16"><path d="M1.5 1 V14.5 H18.5" stroke="#fff" stroke-width="2.6" fill="none"/><path d="M4 11 L8 5.5 L11 8.5 L16 3 V10 H4 Z" fill="#fff"/></svg>
<div class="a" style="left:1708px;top:231px;font-size:17px;color:#fff">Go XY0</div>
<div class="a" style="left:1589px;top:282px;width:276px;height:33px;background:#3e85c7;border-radius:3px;box-shadow:0 1px 2px rgba(0,0,0,.25)"></div>
<svg class="a" style="left:1690px;top:289px" width="20" height="20" viewBox="0 0 20 20"><path d="M19 1 L1 9 L10 10 L11 19 Z" fill="#fff"/></svg>
<div class="a" style="left:1713px;top:290px;font-size:16.5px;color:#fff;word-spacing:3px">Go To</div>
<div class="a title" style="left:1291px;top:383px;font-size:18.2px">Jog Control</div>
<div class="a box" style="left:1279px;top:408px;width:630px;height:265px"></div>
<svg class="a" style="left:0;top:0" width="1899" height="972" viewBox="0 0 1899 972">
<g fill="#3d85c8">
<polygon points="1435.8,413.2 1465.7,427.6 1465.7,471.9 1435.8,457.5 1406.0,471.9 1406.0,427.6"/><polygon points="1406.0,539.8 1435.8,554.2 1465.7,539.8 1465.7,584.0 1435.8,598.4 1406.0,584.0"/><polygon points="1342.8,505.8 1357.6,476.0 1401.9,476.0 1387.5,505.8 1401.9,535.7 1357.6,535.7"/><polygon points="1528.8,505.8 1514.0,476.0 1469.7,476.0 1484.1,505.8 1469.7,535.7 1514.0,535.7"/>
<polygon points="1586.5,442.9 1616.1,457.8 1616.1,500.8 1586.5,487.6 1556.9,500.8 1556.9,457.8"/><polygon points="1556.9,510.8 1586.5,524.0 1616.1,510.8 1616.1,553.8 1586.5,568.7 1556.9,553.8"/>
</g>
<g fill="#3d85c8" stroke="#3d85c8" stroke-width="3" stroke-linejoin="round">
<polygon points="1367.9,437.9 1401.3,450.3 1401.3,455.3 1388.8,456.3 1386.3,470.8 1381.8,471.3"/><polygon points="1503.7,437.9 1470.3,450.3 1470.3,455.3 1482.8,456.3 1485.3,470.8 1489.8,471.3"/><polygon points="1367.9,573.7 1401.3,561.3 1401.3,556.3 1388.8,555.3 1386.3,540.8 1381.8,540.3"/><polygon points="1503.7,573.7 1470.3,561.3 1470.3,556.3 1482.8,555.3 1485.3,540.8 1489.8,540.3"/>
</g>
<polygon points="1423.5,476.0 1448.2,476.0 1465.7,493.5 1465.7,518.2 1448.2,535.7 1423.5,535.7 1406.0,518.2 1406.0,493.5" fill="#cbcbcd"/>
<circle cx="1435.8" cy="505.8" r="19" fill="none" stroke="#d6282b" stroke-width="4.6"/>
<line x1="1422.8" y1="492.8" x2="1448.8" y2="518.8" stroke="#d6282b" stroke-width="4.6"/>
<g font-family="Liberation Sans" font-size="19" fill="#fff" text-anchor="middle">
<text x="1435.8" y="450">Y+</text><text x="1436" y="577">Y-</text>
<text x="1371" y="512.5">X-</text><text x="1499" y="512.5">X+</text>
<text x="1586.5" y="479">Z+</text><text x="1586.5" y="546">Z-</text>
</g>
</svg>

<div class="a" style="left:1709px;top:442px;width:128px;height:34px;background:#dfe1e5;border:1px solid #b5b9bf;border-radius:4px;box-shadow:0 1px 2px rgba(0,0,0,.15)"></div>
<div class="a" style="left:1709px;top:449px;width:128px;text-align:center;font-size:17.5px;color:#3d7fc1">Rapid</div>
<div class="a" style="left:1709px;top:489px;width:128px;height:34px;background:#c9dbef;border:1px solid #4a86c5;border-radius:4px;box-shadow:0 1px 2px rgba(0,0,0,.15)"></div>
<svg class="a" style="left:1709px;top:499px" width="14" height="13" viewBox="0 0 14 13"><path d="M1 1 L13 6.5 L1 12 Z" fill="#3d85c8"/></svg>
<div class="a" style="left:1709px;top:496px;width:128px;text-align:center;font-size:18px;color:#3d7fc1">Normal</div>
<div class="a" style="left:1709px;top:535px;width:128px;height:34px;background:#dfe1e5;border:1px solid #b5b9bf;border-radius:4px;box-shadow:0 1px 2px rgba(0,0,0,.15)"></div>
<div class="a" style="left:1709px;top:542px;width:128px;text-align:center;font-size:17.5px;color:#3d7fc1">Precise</div>

<div class="a" style="left:1299px;top:601px;font-size:16px;color:#3c3f44">XY move (mm)</div>
<div class="a" style="left:1503px;top:601px;font-size:16px;color:#3c3f44;letter-spacing:0.7px">Z move (mm)</div>
<div class="a" style="left:1708px;top:601px;font-size:16px;color:#3c3f44;letter-spacing:0.77px">Speed (mm/min)</div>
<div class="a" style="left:1299px;top:621px;width:172px;height:35px;background:#eceef1;border:1px solid #d5d8dc"></div>
<div class="a" style="left:1330px;top:622px;width:103px;height:33px;background:#fff"></div>
<div class="a" style="left:1330px;top:630px;width:103px;text-align:center;font-size:16px;color:#333">5</div>
<div class="a" style="left:1307px;top:636.5px;width:16px;height:3.6px;background:#222"></div>
<div class="a" style="left:1444px;top:636.5px;width:16px;height:3.6px;background:#222"></div>
<div class="a" style="left:1450.5px;top:630.5px;width:3.6px;height:16px;background:#222"></div>
<div class="a" style="left:1503px;top:621px;width:172px;height:35px;background:#eceef1;border:1px solid #d5d8dc"></div>
<div class="a" style="left:1535px;top:622px;width:102px;height:33px;background:#fff"></div>
<div class="a" style="left:1535px;top:630px;width:102px;text-align:center;font-size:16px;color:#333">2</div>
<div class="a" style="left:1511px;top:636.5px;width:16px;height:3.6px;background:#222"></div>
<div class="a" style="left:1648px;top:636.5px;width:16px;height:3.6px;background:#222"></div>
<div class="a" style="left:1654.5px;top:630.5px;width:3.6px;height:16px;background:#222"></div>
<div class="a" style="left:1708px;top:621px;width:172px;height:35px;background:#eceef1;border:1px solid #d5d8dc"></div>
<div class="a" style="left:1739px;top:622px;width:103px;height:33px;background:#fff"></div>
<div class="a" style="left:1739px;top:630px;width:103px;text-align:center;font-size:16px;color:#333">3000</div>
<div class="a" style="left:1716px;top:636.5px;width:16px;height:3.6px;background:#222"></div>
<div class="a" style="left:1853px;top:636.5px;width:16px;height:3.6px;background:#222"></div>
<div class="a" style="left:1859.5px;top:630.5px;width:3.6px;height:16px;background:#222"></div>
<div class="a" style="left:1279px;top:720px;width:630px;height:260px;background:linear-gradient(90deg,#e5e7eb 0%,#e6e8ec 70%,#eceef0 100%);border-left:1px solid #a9adb5"></div>
<div class="a" style="left:1279px;top:720px;width:630px;height:1px;background:#b4b8be"></div>
<div class="a" style="left:1279px;top:717px;width:144px;height:3.5px;background:#3d7fc1"></div>
<div class="a" style="left:1279px;top:688px;width:144px;text-align:center;font-size:19px;color:#3d7fc1">Probe</div>
<div class="a" style="left:1429px;top:688px;width:144px;text-align:center;font-size:19px;color:#666a70">Macros</div>
<div class="a" style="left:1588px;top:688px;width:144px;text-align:center;font-size:19px;color:#666a70">Console</div>
<div class="a" style="left:1748px;top:688px;width:144px;text-align:center;font-size:19px;color:#8a8d92">Coolant</div>
<div class="a" style="left:1299px;top:770px;font-size:16px;color:#333">Axis</div>
<div class="a" style="left:1372px;top:756px;width:284px;height:44px;background:#dcdfe4;border:1px solid #b5b9bf;border-radius:3px;box-shadow:0 1px 2px rgba(0,0,0,.15)"></div>
<div class="a" style="left:1373px;top:757px;width:56px;height:42px;background:#c5d7ec"></div>
<div class="a" style="left:1373px;top:795px;width:56px;height:4px;background:#3d7fc1"></div>
<div class="a" style="left:1373px;top:770px;width:57px;text-align:center;font-size:17px;color:#3d7fc1">Z</div>
<div class="a" style="left:1429px;top:757px;width:1px;height:42px;background:#b9bdc3"></div>
<div class="a" style="left:1429px;top:770px;width:56px;text-align:center;font-size:17px;color:#3d7fc1">XYZ</div>
<div class="a" style="left:1486px;top:757px;width:1px;height:42px;background:#b9bdc3"></div>
<div class="a" style="left:1486px;top:770px;width:57px;text-align:center;font-size:17px;color:#3d7fc1">XY</div>
<div class="a" style="left:1543px;top:757px;width:1px;height:42px;background:#b9bdc3"></div>
<div class="a" style="left:1543px;top:770px;width:57px;text-align:center;font-size:17px;color:#3d7fc1">X</div>
<div class="a" style="left:1600px;top:757px;width:1px;height:42px;background:#b9bdc3"></div>
<div class="a" style="left:1600px;top:770px;width:56px;text-align:center;font-size:17px;color:#3d7fc1">Y</div>
<div class="a" style="left:1436px;top:887px;width:156px;height:31px;background:#dfe1e5;border:1px solid #b5b9bf;border-radius:4px;box-shadow:0 1px 2px rgba(0,0,0,.15)"></div>
<div class="a" style="left:1436px;top:893px;width:156px;text-align:center;font-size:18px;color:#3d7fc1">Probe</div>
<div class="a" style="left:1760px;top:720px;width:139px;height:200px;background:radial-gradient(ellipse at 70% 40%,rgba(255,255,255,0.45),rgba(255,255,255,0) 70%)"></div>
<svg class="a" style="left:1695px;top:730px" width="200" height="210" viewBox="0 0 926 972">
<g fill="none" stroke="#1a1a1a" stroke-width="5" stroke-linejoin="round" stroke-linecap="round">
<path d="M48 338 L440 322 L456 356"/>
<path d="M48 338 L90 462 L385 452"/>
<path d="M48 338 L50 480 L90 612 L260 606"/>
<path d="M90 462 L90 612"/>
<path d="M88 355 Q90 345 110 343 L420 330 L435 385" stroke-width="3.5"/>
<path d="M88 355 L105 440 Q110 450 130 450 L380 445" stroke-width="3.5"/>
<ellipse cx="178" cy="428" rx="46" ry="14" stroke-width="4"/>
<path d="M140 428 H215 M178 415 L160 440 M178 415 L200 440" stroke-width="3"/>
<path d="M155 48 V220 M205 48 V220" stroke-width="4"/>
<ellipse cx="180" cy="48" rx="25" ry="6" stroke-width="4"/>
<path d="M155 210 L152 385 Q178 398 205 385 L205 210" stroke-width="4"/>
<path d="M158 235 Q200 260 195 300 Q175 340 160 385 M203 215 Q160 250 160 300 Q200 330 200 390" stroke-width="4"/>
<path d="M85 888 L570 258" stroke-width="6"/>
<path d="M300 665 L560 655 Q640 650 660 670 Q650 700 590 710 L340 722"/>
<path d="M300 665 L300 820 L340 935 L735 925 L735 770 L695 650 L600 655"/>
<path d="M300 720 L340 830 L660 812 L735 775"/>
<path d="M340 830 L340 935"/>
<path d="M305 690 L310 720 M630 700 L660 812" stroke-width="4"/>
<circle cx="695" cy="812" r="19" stroke-width="4"/>
<path d="M405 525 V590 M458 460 V590" stroke-width="4"/>
<path d="M408 580 L405 750 Q430 765 455 750 L455 575" stroke-width="4"/>
<path d="M410 600 Q450 630 445 670 Q425 710 415 755 M455 575 Q410 610 412 660 Q450 690 450 755" stroke-width="4"/>
</g>
</svg>
<div class="a" style="left:1818px;top:740px;width:69px;height:68px;border-radius:9px;background:#e2e3e6"></div>
<svg class="a" style="left:1818px;top:740px" width="69" height="68" viewBox="0 0 69 68">
<g fill="none" stroke-width="3" stroke-linecap="round">
<path d="M13.5 27 V19 Q13.5 13 19.5 13 H27" stroke="#c8c9cc"/>
<path d="M42 13 H49.5 Q55.5 13 55.5 19 V27" stroke="#c8c9cc"/>
<path d="M55.5 42 V49 Q55.5 55 49.5 55 H42" stroke="#c8c9cc"/>
<path d="M13.5 42 V49 Q13.5 55 19.5 55 H27" stroke="#3d85c8"/>
</g>
</svg>

</body></html>
